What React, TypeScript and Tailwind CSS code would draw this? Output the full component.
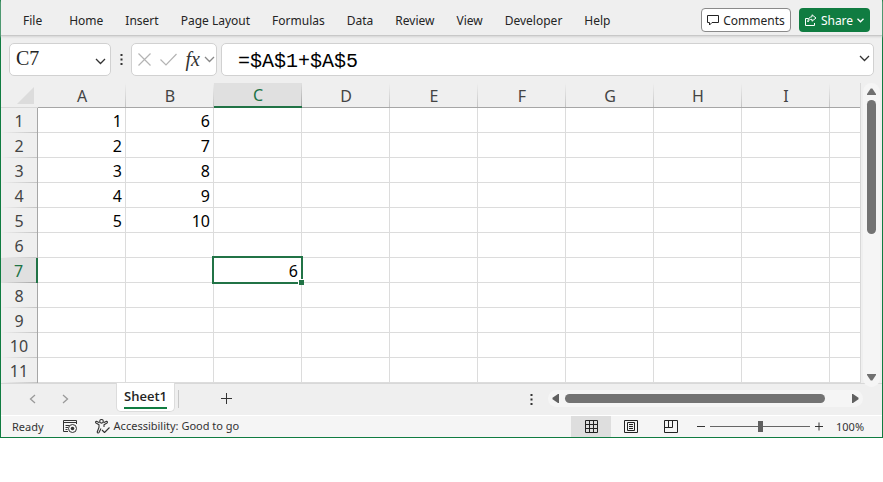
import { useState } from "react";

const MENU = ["Home", "Insert", "Page Layout", "Formulas", "Data", "Review", "View", "Developer", "Help"];
const COLUMNS = ["A", "B", "C", "D", "E", "F", "G", "H", "I"];
const ROWS = [1, 2, 3, 4, 5, 6, 7, 8, 9, 10, 11];
const CELLS: Record<string, number> = {
  A1: 1, A2: 2, A3: 3, A4: 4, A5: 5,
  B1: 6, B2: 7, B3: 8, B4: 9, B5: 10,
  C7: 6,
};
const ACTIVE_COLUMN = "C";
const ACTIVE_ROW = 7;

function Chevron({ className = "" }: { className?: string }) {
  return (
    <svg width="11" height="7" viewBox="0 0 11 7" fill="none" stroke="currentColor" strokeWidth="1.3" className={className} aria-hidden="true">
      <path d="M1 1l4.5 4.5L10 1" />
    </svg>
  );
}

function Dots() {
  return (
    <svg width="3" height="11" viewBox="0 0 3 11" fill="#333" aria-hidden="true">
      <path d="M0.5 0h2v2h-2zM0.5 4.5h2v2h-2zM0.5 9h2v2h-2z" />
    </svg>
  );
}

function MenuBar() {
  return (
    <header className="flex h-9 items-center border-b border-[#c8c8c8] pt-1 pr-3 pl-[22px] shadow-[0_1px_2px_#d4d4d4]">
      <nav className="flex items-center pt-0.5 text-[12px] leading-4 text-[#242424]">
        <button className="mr-[27px]">File</button>
        <div className="flex gap-[22px]">
          {MENU.map((item) => (
            <button key={item} className="whitespace-nowrap">{item}</button>
          ))}
        </div>
      </nav>
      <div className="ml-auto flex gap-2 text-[12px] leading-4">
        <button className="flex h-6 w-[90px] items-center justify-center gap-1 rounded border border-[#8a8a8a] bg-white text-[#242424]">
          <svg width="12" height="12" viewBox="0 0 12 12" fill="none" stroke="currentColor" aria-hidden="true">
            <path d="M0.5 1.5h11v7H5L2.500 11V8.500H0.500z" />
          </svg>
          <span className="pt-0.5">Comments</span>
        </button>
        <button className="flex h-6 w-[71px] items-center justify-center gap-1 rounded bg-[#107c41] text-white">
          <svg width="12" height="12" viewBox="0 0 12 12" fill="none" stroke="currentColor" aria-hidden="true">
            <path d="M3.500 4.500H0.500v7h9V9" />
            <path d="M7 0.800l4 3.200-4 3.200V5.300C5 5.200 3.700 6.200 2.800 8 2.900 5 4.200 3 7 2.700z" strokeLinejoin="round" />
          </svg>
          <span className="pt-0.5">Share</span>
          <svg width="7" height="5" viewBox="0 0 7 5" fill="none" stroke="currentColor" strokeWidth="1.300" className="mt-0.5" aria-hidden="true">
            <path d="M0.500 0.800l3 3 3-3" />
          </svg>
        </button>
      </div>
    </header>
  );
}

function FormulaBar() {
  const [formula, setFormula] = useState("=$A$1+$A$5");
  const [name, setName] = useState("C7");
  const box = "flex h-[33px] items-center rounded-[5px] border border-[#d1d1d1] bg-white";
  return (
    <div className="flex items-center px-2 py-[7px]">
      <div className={`${box} w-[102px] pr-1`}>
        <input
          aria-label="Name box"
          value={name}
          onChange={(e) => setName(e.target.value)}
          className="w-full min-w-0 pb-[3px] pl-1.5 font-['Liberation_Serif',serif] text-[20px] leading-6 text-[#242424] outline-none"
        />
        <button aria-label="Open name list" className="shrink-0 text-[#333]"><Chevron className="mt-1" /></button>
      </div>
      <div className="flex w-5 justify-center"><Dots /></div>
      <div className={`${box} w-[86px] justify-between pr-px pl-1.5`}>
        <button aria-label="Cancel" className="text-[#b4b4b4]">
          <svg width="13" height="13" viewBox="0 0 13 13" stroke="currentColor" strokeWidth="1.200" aria-hidden="true">
            <path d="M0.500 0.500l12 12M12.500 0.500l-12 12" />
          </svg>
        </button>
        <button aria-label="Enter" className="text-[#b4b4b4]">
          <svg width="17" height="13" viewBox="0 0 17 13" fill="none" stroke="currentColor" strokeWidth="1.200" aria-hidden="true">
            <path d="M0.500 6.500l5.500 5.500L16.500 1" />
          </svg>
        </button>
        <div className="flex items-center gap-1">
          <button aria-label="Insert function" className="pb-0.5 font-['Liberation_Serif',serif] text-[20px] leading-6 text-[#333] italic">fx</button>
          <button aria-label="Function list" className="text-[#888]"><Chevron /></button>
        </div>
      </div>
      <div className={`${box} ml-1 min-w-0 flex-1 pr-[3px]`}>
        <input
          aria-label="Formula"
          value={formula}
          onChange={(e) => setFormula(e.target.value)}
          className="min-w-0 flex-1 pt-1 pl-4 font-['Liberation_Mono',monospace] text-[20px] leading-6 text-black outline-none"
        />
        <button aria-label="Expand formula bar" className="text-[#333]"><Chevron className="mb-0.5" /></button>
      </div>
    </div>
  );
}

function VerticalScroll() {
  return (
    <div className="mx-0.5 -mb-1 flex w-[17px] shrink-0 flex-col items-center rounded-full bg-[#f5f5f5] pt-[5px] pb-1.5 text-[#707070]">
      <button aria-label="Scroll up">
        <svg width="9" height="7" viewBox="0 0 9 7" fill="currentColor" className="block" aria-hidden="true"><path d="M3.700 0.500h1.600L9 6v1H0V6z" /></svg>
      </button>
      <div className="mt-[5px] h-[134px] w-[9px] rounded-full bg-[#737373]" />
      <button aria-label="Scroll down" className="mt-auto">
        <svg width="9" height="7" viewBox="0 0 9 7" fill="currentColor" className="block" aria-hidden="true"><path d="M3.700 6.500h1.600L9 1V0H0v1z" /></svg>
      </button>
    </div>
  );
}

function Grid() {
  return (
    <div className="flex">
      <table className="min-w-0 flex-1 table-fixed border-separate border-spacing-0 border-r border-[#d8d8d8] bg-white text-[16px] leading-[22px]">
        <colgroup>
          <col className="w-[37px]" />
          {COLUMNS.map((c) => <col key={c} className="w-[88px]" />)}
          <col />
        </colgroup>
        <thead>
          <tr className="h-[25px] bg-[#efefef] text-[#444]">
            <td className="border-b border-[#d8d8d8] p-0">
              <svg width="17" height="17" viewBox="0 0 17 17" fill="#dcdcdc" className="ml-auto mr-1 block" aria-hidden="true"><path d="M17 0v17H0z" /></svg>
            </td>
            {COLUMNS.map((c) => (
              <th
                key={c}
                scope="col"
                className={
                  c === ACTIVE_COLUMN
                    ? "border-b-2 border-[#217346] bg-[#e0e0e0] bg-[linear-gradient(#e0e0e0,#a6a6a6)] bg-[length:1px_100%] bg-right bg-no-repeat p-0 pt-px font-normal text-[#217346]"
                    : "border-b border-[#a6a6a6] bg-[linear-gradient(#efefef,#c4c4c4)] bg-[length:1px_100%] bg-right bg-no-repeat p-0 pt-0.5 font-normal"
                }
              >
                {c}
              </th>
            ))}
            <td className="border-b border-[#a6a6a6] p-0" />
          </tr>
        </thead>
        <tbody>
          {ROWS.map((r) => (
            <tr key={r} className="h-[25px]">
              <th
                scope="row"
                className={
                  r === ACTIVE_ROW
                    ? "border-r-2 border-[#217346] bg-[#e0e0e0] bg-[linear-gradient(to_right,#e0e0e0,#a6a6a6)] bg-[length:100%_1px] bg-bottom bg-no-repeat p-0 font-normal text-[#217346]"
                    : "border-r border-[#a6a6a6] bg-[#efefef] bg-[linear-gradient(to_right,#efefef,#c4c4c4)] bg-[length:100%_1px] bg-bottom bg-no-repeat p-0 font-normal text-[#444]"
                }
              >
                {r}
              </th>
              {COLUMNS.map((c) =>
                r === ACTIVE_ROW && c === ACTIVE_COLUMN ? (
                  <td key={c} className="relative border-r border-b border-[#dcdcdc] p-0 pt-px pr-[3px] text-right text-black">
                    {CELLS[`${c}${r}`]}
                    <span className="absolute -inset-0.5 border-2 border-[#217346]">
                      <span className="absolute -right-[3px] -bottom-[3px] size-1.5 border-t border-l border-white bg-[#217346]" />
                    </span>
                  </td>
                ) : (
                  <td key={c} className="border-r border-b border-[#dcdcdc] p-0 pt-px pr-[3px] text-right text-black">
                    {CELLS[`${c}${r}`]}
                  </td>
                ),
              )}
              <td className="border-b border-[#dcdcdc] p-0" />
            </tr>
          ))}
        </tbody>
      </table>
      <VerticalScroll />
    </div>
  );
}

function SheetBar() {
  return (
    <div className="flex h-8 items-center border-t border-[#d8d8d8] pr-[19px] pb-0.5 pl-7">
      <button aria-label="Previous sheet" className="text-[#999]">
        <svg width="7" height="10" viewBox="0 0 7 10" fill="none" stroke="currentColor" strokeWidth="1.300" aria-hidden="true"><path d="M6 1L1.500 5 6 9" /></svg>
      </button>
      <button aria-label="Next sheet" className="ml-[26px] text-[#999]">
        <svg width="7" height="10" viewBox="0 0 7 10" fill="none" stroke="currentColor" strokeWidth="1.300" aria-hidden="true"><path d="M1 1l4.500 4L1 9" /></svg>
      </button>
      <button className="-mt-0.5 ml-[47px] flex h-[29px] w-[59px] items-start justify-center rounded-b-[5px] border border-t-0 border-[#dcdcdc] bg-white pt-1 font-['Open_Sans',sans-serif] text-[13px] leading-[18px] font-semibold text-[#242424]">
        <span className="border-b-2 border-[#107c41] pb-0.5">Sheet1</span>
      </button>
      <div className="ml-[3px] h-[18px] w-px bg-[#c8c8c8]" />
      <button aria-label="New sheet" className="ml-[42px] text-[#333]">
        <svg width="11" height="11" viewBox="0 0 11 11" stroke="currentColor" aria-hidden="true"><path d="M5.500 0v11M0 5.500h11" /></svg>
      </button>
      <div className="mt-0.5 ml-auto"><Dots /></div>
      <div className="ml-[15px] flex h-[17px] w-[315px] items-center rounded-full bg-[#f5f5f5] px-1 text-[#606060]">
        <button aria-label="Scroll left">
          <svg width="7" height="9" viewBox="0 0 7 9" fill="currentColor" className="block" aria-hidden="true"><path d="M0.500 3.700v1.600L6 9h1V0H6z" /></svg>
        </button>
        <div className="ml-1.5 h-[9px] w-[260px] rounded-full bg-[#737373]" />
        <button aria-label="Scroll right" className="ml-auto">
          <svg width="7" height="9" viewBox="0 0 7 9" fill="currentColor" className="block" aria-hidden="true"><path d="M6.500 3.700v1.600L1 9H0V0h1z" /></svg>
        </button>
      </div>
    </div>
  );
}

function StatusBar() {
  const [zoom, setZoom] = useState(100);
  return (
    <footer className="flex h-[22px] items-center border-t border-white bg-[#f5f5f5] pr-[18px] pl-[11px] text-[11px] leading-4 text-[#333]">
      <span>Ready</span>
      <button aria-label="Record macro" className="ml-[19px]">
        <svg width="15" height="13" viewBox="0 0 15 13" fill="none" stroke="#333" aria-hidden="true">
          <path d="M5 11.500H0.500v-11h13V4M0.500 2.500h13M2.500 5.500h4M2.500 7.500h2.500M2.500 9.500h2" />
          <circle cx="9.500" cy="8.500" r="4" fill="#f5f5f5" />
          <circle cx="9.500" cy="8.500" r="1.800" fill="#333" stroke="none" />
        </svg>
      </button>
      <button className="ml-[17px] flex items-center gap-1 pb-px">
        <svg width="15" height="15" viewBox="0 0 15 15" fill="none" stroke="#333" strokeWidth="1.100" strokeLinejoin="round" aria-hidden="true">
          <circle cx="6.500" cy="2.300" r="1.800" />
          <path d="M4.500 3.800L1.500 2.300C0.500 2.300 0.300 3.500 1 4l3 1.700v2.500L2.200 13c0 1 1.300 1.300 1.800 0.500L6 9.500M8.500 3.800l3-1.500c1 0 1.200 1.200 0.500 1.700L9 5.700V8M7 11l2.500 2.500 5-5" />
        </svg>
        Accessibility: Good to go
      </button>
      <div className="ml-auto flex h-full">
        <button aria-label="Normal view" className="flex w-10 items-center justify-center bg-[#dedede]">
          <svg width="13" height="13" viewBox="0 0 13 13" fill="none" stroke="#222" aria-hidden="true"><path d="M0.500 0.500h12v12H0.500zM4.500 0v13M8.500 0v13M0 4.500h13M0 8.500h13" /></svg>
        </button>
        <button aria-label="Page layout view" className="flex w-10 items-center justify-center">
          <svg width="14" height="13" viewBox="0 0 14 13" fill="none" stroke="#222" aria-hidden="true"><path d="M0.500 0.500h13v12H0.500zM3.500 2.500h7v8h-7zM5 4.500h4M5 6.500h4M5 8.500h4" /></svg>
        </button>
        <button aria-label="Page break preview" className="flex w-10 items-center justify-center">
          <svg width="14" height="13" viewBox="0 0 14 13" fill="none" stroke="#222" aria-hidden="true"><path d="M0.500 0.500h13v12H0.500zM4.500 0.500v7M8.500 0.500v7M0.500 7.500h8" /></svg>
        </button>
      </div>
      <button aria-label="Zoom out" className="ml-1.5">
        <svg width="8" height="9" viewBox="0 0 8 9" stroke="#333" className="block" aria-hidden="true"><path d="M0 4.500h8" /></svg>
      </button>
      <input
        type="range"
        aria-label="Zoom"
        min={0}
        max={200}
        value={zoom}
        onChange={(e) => setZoom(Number(e.target.value))}
        className="mx-[5px] h-[11px] w-[100px] appearance-none bg-[linear-gradient(#666,#666)] bg-[length:100%_1px] bg-center bg-no-repeat [&::-webkit-slider-thumb]:h-[11px] [&::-webkit-slider-thumb]:w-[5px] [&::-webkit-slider-thumb]:appearance-none [&::-webkit-slider-thumb]:bg-[#606060]"
      />
      <button aria-label="Zoom in">
        <svg width="8" height="9" viewBox="0 0 8 9" stroke="#333" className="block" aria-hidden="true"><path d="M0 4.500h8M4 0.500v8" /></svg>
      </button>
      <span className="ml-[13px] w-7 text-right">{zoom}%</span>
    </footer>
  );
}

export default function App() {
  return (
    <div className="min-h-screen bg-white font-['Noto_Sans',sans-serif]">
      <main className="border-x border-b border-[#107c41] bg-[#efefef]">
        <MenuBar />
        <FormulaBar />
        <Grid />
        <SheetBar />
        <StatusBar />
      </main>
    </div>
  );
}
